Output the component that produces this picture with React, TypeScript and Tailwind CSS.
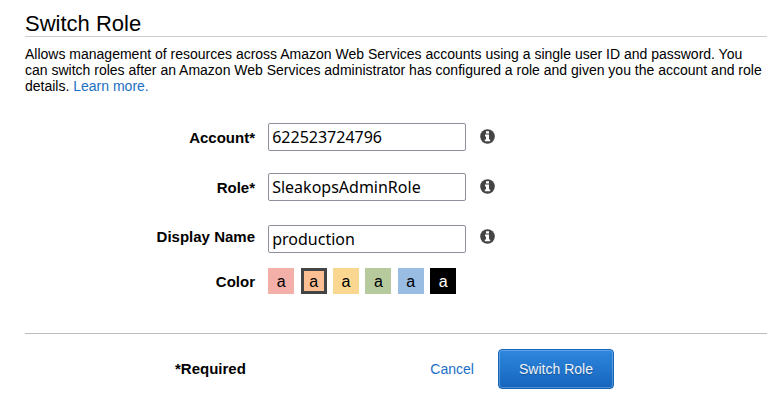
import React from "react";

function InfoIcon() {
  return (
    <svg width="15" height="15" viewBox="0 0 15 15" className="block">
      <circle cx="7.5" cy="7.5" r="7.3" fill="#444" />
      <path d="M6 2.2h3v2.4H6zM5 5.6h4v4.8h1.2v1.8H4.8v-1.8H6V7.4H5z" fill="#fff" />
    </svg>
  );
}

type FieldProps = { label: string; value: string; className: string; labelClass: string; iconClass: string };

function Field({ label, value, className, labelClass, iconClass }: FieldProps) {
  return (
    <div className={`flex h-7 items-start ${className}`}>
      <label className={`w-[255px] text-right text-[15px] font-bold leading-[18px] ${labelClass}`}>{label}</label>
      <input
        readOnly
        value={value}
        className="ml-[13px] h-7 w-[198px] rounded-[2px] border border-[#8f8f9d] bg-white px-[3.2px] font-['Noto_Sans',sans-serif] text-[16px] text-black outline-none"
      />
      <span className={`ml-[14px] ${iconClass}`}>
        <InfoIcon />
      </span>
    </div>
  );
}

const swatches = [
  { name: "red", style: "bg-[#f2b0a9] text-black pt-0.5" },
  { name: "orange", style: "bg-[#fbbf93] text-black pt-0.5 border-[3px] border-[#444]" },
  { name: "yellow", style: "bg-[#fad791] text-black pt-0.5" },
  { name: "green", style: "bg-[#b7ca9d] text-black pt-0.5" },
  { name: "blue", style: "bg-[#99bce3] text-black pt-0.5" },
  { name: "black", style: "bg-black text-white pt-0.5" },
];

export default function App() {
  return (
    <main className="h-[411px] w-[784px] overflow-hidden bg-white font-['Liberation_Sans',Arial,sans-serif] text-black">
      <h1 className="ml-[25px] mr-[17px] h-[37px] border-b border-[#ccc] pt-[11px] text-[22px] leading-[26px]">Switch Role</h1>
      <p className="ml-[25px] mt-[9px] h-12 whitespace-nowrap text-[14.01px] leading-4">
        Allows management of resources across Amazon Web Services accounts using a single user ID and password. You
        <br />
        can switch roles after an Amazon Web Services administrator has configured a role and given you the account and role
        <br />
        details. <a className="text-[#1a6fc4]">Learn more.</a>
      </p>
      <form>
        <Field className="mt-[29px]" labelClass="mt-1.5" iconClass="mt-1.5" label="Account*" value="622523724796" />
        <Field className="mt-[22px]" labelClass="mt-1.5" iconClass="mt-1.5" label="Role*" value="SleakopsAdminRole" />
        <Field className="mt-[24px]" labelClass="mt-[3px]" iconClass="mt-1" label="Display Name" value="production" />
        <div className="mt-[15px] flex h-[26px] items-center">
          <span className="w-[255px] pt-0.5 text-right text-[15px] font-bold leading-[18px]">Color</span>
          <div className="ml-[13.2px] flex gap-[6.4px]">
            {swatches.map((s) => (
              <span key={s.name} className={`flex h-[26px] w-[26px] items-center justify-center text-[16px] leading-[18px] ${s.style}`}>a</span>
            ))}
          </div>
        </div>
      </form>
      <footer className="ml-[25px] mr-[17px] mt-[39px] flex h-[56px] items-end border-t border-[#bbb]">
        <strong className="ml-[150px] w-[255px] text-[15px] leading-[40px]">*Required</strong>
        <a className="w-[68px] pl-[0.3px] text-[14px] leading-[40px] text-[#1a6fc4]">Cancel</a>
        <button className="h-10 w-[116px] rounded-[4px] border border-[#1166bb] bg-linear-to-b from-[#2f87dd] to-[#1565bd] pt-px text-[14px] text-[#eef4fb] shadow-[inset_0_0_0_1px_rgba(255,255,255,0.25)] [text-shadow:0_1px_1px_rgba(0,0,0,0.3)]">Switch Role</button>
      </footer>
    </main>
  );
}
